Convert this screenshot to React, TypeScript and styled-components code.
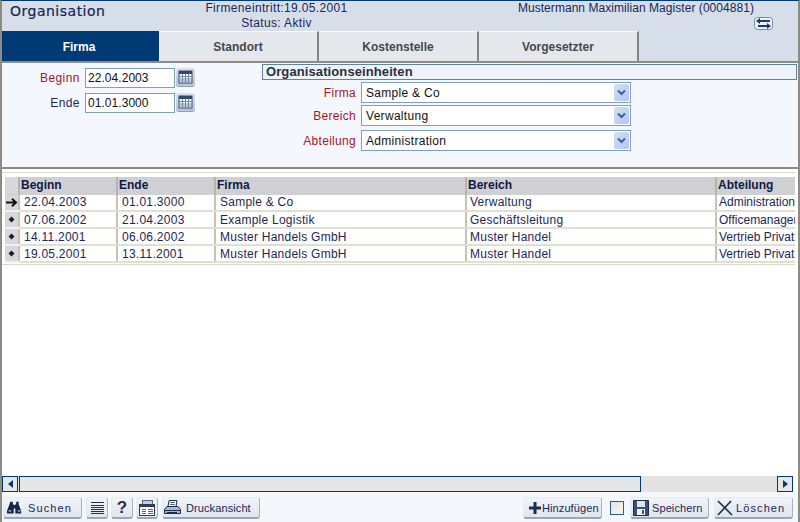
import React from "react";
import styled, { createGlobalStyle } from "styled-components";

const Global = createGlobalStyle`
  html, body { margin: 0; padding: 0; background: #fff; }
  * { box-sizing: border-box; }
`;

const Page = styled.div`
  width: 800px; height: 522px; display: flex; flex-direction: column; overflow: hidden;
  font-family: "Liberation Sans", Arial, sans-serif; font-size: 12px; color: #1c2658;
  border-top: 1px solid #003a75; border-left: 2px solid #8c8c84; border-right: 2px solid #8c8c84;
  background: #fff;
`;
const Header = styled.header`
  height: 30px; background: #d6dfe9; display: grid; grid-template-columns: 186px 180px 1fr;
  margin-left: -1px;
`;
const Title = styled.h1`
  margin: 0; padding: 2px 0 0 9px; font: 14px/17px "DejaVu Sans", sans-serif; letter-spacing: .5px; color: #1a2458; -webkit-text-stroke: .2px #1a2458;
`;
const Info = styled.div`
  text-align: center; line-height: 15px; letter-spacing: .35px; color: #1c2658; margin-left: -1px;
  white-space: nowrap;
`;
const Person = styled.div`
  display: flex; flex-direction: column; align-items: flex-end; padding: 0 44px 0 0; line-height: 14px; letter-spacing: .05px;
  white-space: nowrap;
`;
const SwapButton = styled.span`
  display: flex; margin: 2px -19px 0 0; width: 19px; height: 13px;
`;
const Tabs = styled.nav`
  height: 32px; background: #d6dfe9; display: flex; border-bottom: 2px solid #8c8c84; margin-left: -1px; margin-right: -1px;
`;
const Tab = styled.div<{ $active?: boolean }>`
  width: ${p => p.$active ? 158 : 160}px; height: 30px; display: flex; align-items: center; justify-content: center;
  font-weight: bold; font-size: 12px;
  background: ${p => p.$active ? "#003a75" : "#e4e8ec"};
  color: ${p => p.$active ? "#fff" : "#444850"};
  border-right: 2px solid ${p => p.$active ? "#003a75" : "#84847e"};
  border-top: 1px solid ${p => p.$active ? "#003a75" : "#fbfcfd"};
`;
const Form = styled.section`
  height: 106px; background: #f4f8fe; display: grid; grid-template-columns: 260px 1fr; border-bottom: 2px solid #8c8c84;
`;
const LeftCol = styled.div`
  display: flex; flex-direction: column; gap: 5px; padding-top: 5px;
`;
const DateRow = styled.div`
  display: flex; align-items: flex-start; height: 20px;
`;
const Label = styled.label<{ $req?: boolean; $w: number; $spacing: number }>`
  width: ${p => p.$w}px; text-align: right; line-height: 20px; letter-spacing: ${p => p.$spacing}px;
  color: ${p => p.$req ? "#a8141e" : "#1c2658"};
`;
const DateInput = styled.input`
  width: 90px; height: 20px; margin-left: 5px; border: 1px solid #7d9fbd; background: #fff; padding: 0 0 0 2px;
  font: 12px "Liberation Sans", sans-serif; letter-spacing: .05px; color: #111; outline: none;
`;
const CalButton = styled.span`
  width: 19px; height: 19px; margin-left: 1px; display: flex; align-items: center; justify-content: center;
  background: linear-gradient(#dbe2ea, #b9c5d2); border-radius: 3px; border-bottom: 1px solid #93a1af;
`;
const RightCol = styled.div`
  display: flex; flex-direction: column; padding-top: 1px;
`;
const GroupTitle = styled.div`
  height: 16px; margin-right: 1px; border: 1px solid #5f83a8; background: #eef3f9; padding-left: 3px;
  font-weight: bold; font-size: 13px; line-height: 14px; letter-spacing: .1px; color: #2a3040;
`;
const SelectRow = styled.div<{ $gap: number }>`
  display: flex; height: 21px; margin-top: ${p => p.$gap}px; align-items: center;
`;
const Select = styled.div`
  width: 270px; height: 21px; margin-left: 5px; border: 1px solid #7d9fbd; background: #fff; display: flex;
  align-items: center; justify-content: space-between; padding: 0 1px 0 4px; color: #111; letter-spacing: .3px;
`;
const Arrow = styled.span`
  width: 15px; height: 17px; display: flex; align-items: center; justify-content: center;
  background: linear-gradient(135deg, #d4e0f8, #aec6f2); border-radius: 2px;
`;
const TableArea = styled.div`
  flex: 1; min-height: 0; background: #fff; overflow: hidden; padding-top: 1px;
`;
const TableFrame = styled.div`
  border-top: 1px solid #d8d8cc; border-bottom: 1px solid #d8d8cc; margin-top: 2px; padding: 4px 0 0 3px; height: 93px; width: 793px; overflow: hidden;
`;
const Table = styled.table`
  border-collapse: collapse; table-layout: fixed; width: 790px;
`;
const HeadCell = styled.th<{ $w: number }>`
  width: ${p => p.$w}px; height: 17px; padding: 0 0 0 1px; background: #cfcfd4; text-align: left; font-size: 12px; font-weight: bold;
  color: #111a40; border-left: 2px solid #b6b6a8; white-space: nowrap; overflow: hidden; border-bottom: 1px solid #cfcfd4;
  &:first-child { border-left: 0; background: #d8d8dc; }
`;
const Cell = styled.td`
  height: 17px; padding: 0 0 0 4px; white-space: nowrap; overflow: hidden; letter-spacing: .25px; line-height: 14px;
  color: #1c2658; border-left: 2px solid #c4c4b4; border-bottom: 2px solid #e0e0d2; background: #fff;
  &:nth-child(5) { padding-left: 3px; }
  &:last-child { padding-left: 2px; letter-spacing: 0; }
`;
const RowHead = styled.td`
  height: 17px; padding: 0; background: #d8d8dc; border-bottom: 2px solid #f2f2ea; text-align: center; vertical-align: middle; line-height: 0;
`;
const ScrollBar = styled.div`
  height: 16px; display: flex; background: #e2e2e2; width: 791px;
`;
const ScrollButton = styled.span`
  width: 16px; height: 16px; border: 1px solid #003a75; background: #e6e6e6; display: flex; align-items: center; justify-content: center;
`;
const Thumb = styled.span`
  height: 16px; width: 622px; margin-left: 1px; border: 1px solid #003a75; background: #e6e6e6;
`;
const Track = styled.span`
  flex: 1;
`;
const Toolbar = styled.footer`
  height: 30px; display: flex; align-items: flex-start; padding: 5px 5px 0 1px; background: #f4f7fb; gap: 3px;
`;
const Button = styled.button<{ $w: number; $gap?: number; $spacing?: number; $pad?: number; $ml?: number }>`
  width: ${p => p.$w}px; height: 22px; padding: 0 0 0 ${p => p.$pad ?? 3}px; margin-left: ${p => p.$ml ?? 0}px;
  display: flex; align-items: center; gap: ${p => p.$gap ?? 4}px;
  background: linear-gradient(#f0f4f9, #dfe6ee); border: 1px solid #e6ebf1; border-right-color: #a5b2bf; border-bottom: 2px solid #9aa8b6; border-radius: 3px;
  font: 11px "Liberation Sans", sans-serif; color: #1c2658; letter-spacing: ${p => p.$spacing ?? .3}px; white-space: nowrap;
`;
const IconButton = styled(Button)`
  justify-content: center; padding: 0;
`;
const Question = styled.span`
  font: bold 17px "Liberation Sans", sans-serif; color: #22314f; line-height: 18px;
`;
const Spacer = styled.span`
  flex: 1;
`;
const Check = styled.span`
  width: 14px; height: 14px; border: 1px solid #2c5f90; background: linear-gradient(135deg, #e2e2dc, #fafaf6); margin: 4px 3px 0 5px;
`;

const Cal = () => (
  <svg width="15" height="14" viewBox="0 0 15 14">
    <rect x="1" y="1" width="13" height="12" fill="#fff" stroke="#2e4a6c" />
    <rect x="1" y="1" width="13" height="3" fill="#2e4a6c" />
    <path d="M1 6.500h13M1 9h13M1 11h13M4.500 4v9M7.500 4v9M10.500 4v9" stroke="#6f89a6" strokeWidth="1" />
  </svg>
);
const Down = () => (
  <svg width="9" height="7" viewBox="0 0 9 7"><path d="M1 1.500l3.500 3.500L8 1.500" fill="none" stroke="#3f5f8f" strokeWidth="2" /></svg>
);
const Swap = () => (
  <svg width="19" height="13" viewBox="0 0 19 13">
    <rect x=".5" y=".5" width="18" height="12" rx="3" fill="#eef2f7" stroke="#7a8a9a" />
    <path d="M4 4h12M4 9h11" stroke="#1a3a80" strokeWidth="2" />
    <path d="M6 1L2 4l4 3zM13 6L17 9l-4 3z" fill="#1a3a80" />
  </svg>
);
const CurrentRow = () => (
  <svg width="12" height="9" viewBox="0 0 12 9"><path d="M0 4.500h9M6 .8l4 3.700-4 3.700" fill="none" stroke="#111" strokeWidth="2" /></svg>
);
const Dot = () => (
  <svg width="7" height="7" viewBox="0 0 7 7"><path d="M3.500 .5l3 3-3 3-3-3z" fill="#1a1a2a" /></svg>
);
const Binoculars = () => (
  <svg width="15" height="14" viewBox="0 0 18 15" fill="#16264e">
    <path d="M4 0h3v3h1v1h2V3h1V0h3v3l3 8v3h-7V8H8v6H0v-3l3-8z" />
    <path d="M2 10h3v2H2zM13 10h3v2h-3z" fill="#8fa3c0" />
  </svg>
);
const ListIcon = () => (
  <svg width="13" height="14" viewBox="0 0 13 14"><path d="M0 1.500h13M0 4.500h13M0 6.500h13M0 8.500h13M0 10.500h13M0 12.500h13" stroke="#223054" /></svg>
);
const CopyIcon = () => (
  <svg width="16" height="16" viewBox="0 0 16 16">
    <rect x="3.500" y=".5" width="10" height="11" fill="#c4cfdd" stroke="#55657f" />
    <rect x=".5" y="4.500" width="15" height="11" fill="#fff" stroke="#2c3c5c" />
    <rect x="1" y="5" width="14" height="2" fill="#2c3c5c" />
    <path d="M3 9.500h4M3 11.500h4M3 13.500h4M9 9.500h5M9 11.500h5M9 13.500h5" stroke="#54688a" />
  </svg>
);
const PrintIcon = () => (
  <svg width="17" height="16" viewBox="0 0 17 16">
    <path d="M5 .5h8l-1 6H4z" fill="#fff" stroke="#1c2c4c" />
    <path d="M3 6.500h11l2.500 3v4H.5v-4z" fill="#aab8cc" stroke="#1c2c4c" />
    <path d="M1 10.500h15M3 12.500h10" stroke="#1c2c4c" />
    <path d="M6 2.500h5M6 4.500h5" stroke="#54688a" />
  </svg>
);
const PlusIcon = () => (
  <svg width="12" height="12" viewBox="0 0 12 12"><path d="M6 0v12M0 6h12" stroke="#1c2c54" strokeWidth="3" /></svg>
);
const SaveIcon = () => (
  <svg width="16" height="16" viewBox="0 0 16 16">
    <path d="M.5.5h15v15H.5z" fill="#3a5278" stroke="#1c2c4c" />
    <rect x="4" y="1" width="8" height="6" fill="#dfe6ee" />
    <rect x="4" y="9" width="8" height="6" fill="#f2f4f8" />
    <rect x="9" y="10" width="2" height="4" fill="#3a5278" />
  </svg>
);
const CloseIcon = () => (
  <svg width="16" height="16" viewBox="0 0 16 16"><path d="M1 1l14 14M14 1L1 15" stroke="#1c2c4c" strokeWidth="1.600" /></svg>
);
const Left = () => <svg width="5" height="8" viewBox="0 0 5 8"><path d="M5 0v8L0 4z" fill="#003a75" /></svg>;
const Right = () => <svg width="5" height="8" viewBox="0 0 5 8"><path d="M0 0v8l5-4z" fill="#003a75" /></svg>;

const columns = [
  { name: "", w: 14 }, { name: "Beginn", w: 98 }, { name: "Ende", w: 98 },
  { name: "Firma", w: 251 }, { name: "Bereich", w: 250 }, { name: "Abteilung", w: 79 },
];
const rows = [
  ["22.04.2003", "01.01.3000", "Sample & Co", "Verwaltung", "Administration"],
  ["07.06.2002", "21.04.2003", "Example Logistik", "Geschäftsleitung", "Officemanagement"],
  ["14.11.2001", "06.06.2002", "Muster Handels GmbH", "Muster Handel", "Vertrieb Privat"],
  ["19.05.2001", "13.11.2001", "Muster Handels GmbH", "Muster Handel", "Vertrieb Privat"],
];
const selects = [
  { label: "Firma", value: "Sample & Co", gap: 2 },
  { label: "Bereich", value: "Verwaltung", gap: 2 },
  { label: "Abteilung", value: "Administration", gap: 4 },
];

export default function App() {
  return (
    <Page>
      <Global />
      <Header>
        <Title>Organisation</Title>
        <Info>Firmeneintritt:19.05.2001<br />Status: Aktiv</Info>
        <Person>
          Mustermann Maximilian Magister (0004881)
          <SwapButton><Swap /></SwapButton>
        </Person>
      </Header>
      <Tabs>
        <Tab $active>Firma</Tab>
        <Tab>Standort</Tab>
        <Tab>Kostenstelle</Tab>
        <Tab>Vorgesetzter</Tab>
      </Tabs>
      <Form>
        <LeftCol>
          <DateRow>
            <Label $req $w={78} $spacing={.45}>Beginn</Label>
            <DateInput readOnly value="22.04.2003" />
            <CalButton><Cal /></CalButton>
          </DateRow>
          <DateRow>
            <Label $w={78} $spacing={.45}>Ende</Label>
            <DateInput readOnly value="01.01.3000" />
            <CalButton><Cal /></CalButton>
          </DateRow>
        </LeftCol>
        <RightCol>
          <GroupTitle>Organisationseinheiten</GroupTitle>
          {selects.map(s => (
            <SelectRow key={s.label} $gap={s.gap}>
              <Label $req $w={94} $spacing={.3}>{s.label}</Label>
              <Select>{s.value}<Arrow><Down /></Arrow></Select>
            </SelectRow>
          ))}
        </RightCol>
      </Form>
      <TableArea>
        <TableFrame>
          <Table>
            <thead>
              <tr>{columns.map(c => <HeadCell key={c.name} $w={c.w}>{c.name}</HeadCell>)}</tr>
            </thead>
            <tbody>
              {rows.map((r, i) => (
                <tr key={r[0]}>
                  <RowHead>{i === 0 ? <CurrentRow /> : <Dot />}</RowHead>
                  {r.map((v, j) => <Cell key={j}>{v}</Cell>)}
                </tr>
              ))}
            </tbody>
          </Table>
        </TableFrame>
      </TableArea>
      <ScrollBar>
        <ScrollButton><Left /></ScrollButton>
        <Thumb />
        <Track />
        <ScrollButton><Right /></ScrollButton>
      </ScrollBar>
      <Toolbar>
        <Button $w={79} $gap={6} $spacing={1.1}><Binoculars />Suchen</Button>
        <IconButton $w={22} $ml={1}><ListIcon /></IconButton>
        <IconButton $w={22}><Question>?</Question></IconButton>
        <IconButton $w={22}><CopyIcon /></IconButton>
        <Button $w={98} $ml={1} $pad={1} $gap={5} $spacing={.1}><PrintIcon />Druckansicht</Button>
        <Spacer />
        <Button $w={79} $pad={5} $gap={1} $spacing={.1}><PlusIcon />Hinzufügen</Button>
        <Check />
        <Button $w={79} $pad={2} $gap={3} $spacing={.1}><SaveIcon />Speichern</Button>
        <Button $w={79} $ml={2} $pad={2} $gap={3} $spacing={1.1}><CloseIcon />Löschen</Button>
      </Toolbar>
    </Page>
  );
}
